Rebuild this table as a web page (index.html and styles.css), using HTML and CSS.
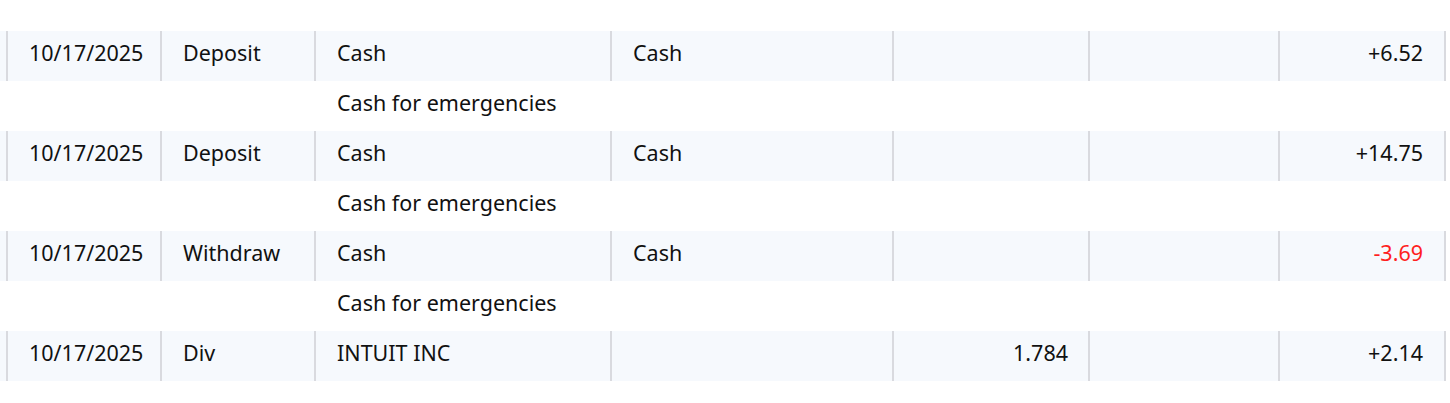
FILE: index.html
```html
<!DOCTYPE html>
<html lang="en">
<head>
    <meta charset="UTF-8">
    <meta name="viewport" content="width=device-width, initial-scale=1.0">
    <title>Transactions</title>
    <link rel="stylesheet" href="styles.css">
</head>
<body>
    <div class="ledger">
        <div class="row data">
            <div class="cell">10/17/2025</div>
            <div class="cell">Deposit</div>
            <div class="cell">Cash</div>
            <div class="cell">Cash</div>
            <div class="cell num"></div>
            <div class="cell num"></div>
            <div class="cell num last">+6.52</div>
        </div>
        <div class="row note">
            <div class="memo">Cash for emergencies</div>
        </div>

        <div class="row data">
            <div class="cell">10/17/2025</div>
            <div class="cell">Deposit</div>
            <div class="cell">Cash</div>
            <div class="cell">Cash</div>
            <div class="cell num"></div>
            <div class="cell num"></div>
            <div class="cell num last">+14.75</div>
        </div>
        <div class="row note">
            <div class="memo">Cash for emergencies</div>
        </div>

        <div class="row data">
            <div class="cell">10/17/2025</div>
            <div class="cell">Withdraw</div>
            <div class="cell">Cash</div>
            <div class="cell">Cash</div>
            <div class="cell num"></div>
            <div class="cell num"></div>
            <div class="cell num last negative">-3.69</div>
        </div>
        <div class="row note">
            <div class="memo">Cash for emergencies</div>
        </div>

        <div class="row data">
            <div class="cell">10/17/2025</div>
            <div class="cell">Div</div>
            <div class="cell">INTUIT INC</div>
            <div class="cell"></div>
            <div class="cell num">1.784</div>
            <div class="cell num"></div>
            <div class="cell num last">+2.14</div>
        </div>
    </div>
</body>
</html>
```

FILE: styles.css
```css
body {
    margin: 0;
    background: #fff;
    font-family: "Noto Sans", "Open Sans", sans-serif;
    font-size: 21.5px;
    color: #111;
}
.ledger {
    padding-top: 31px;
}
.row {
    display: grid;
    grid-template-columns: 154px 154px 296px 282px 196px 190px 168px;
    height: 50px;
    padding-left: 6px;
}
.data {
    background-color: #f6f9fd;
    width: 1440px;
}
.cell {
    box-sizing: border-box;
    border-left: 2px solid #d9dadf;
    padding: 0 21px 6px;
    line-height: 44px;
    white-space: nowrap;
}
.num {
    text-align: right;
    padding-right: 20px;
}
.last {
    border-right: 2px solid #d9dadf;
    padding-right: 21px;
}
.negative {
    color: #ff1f1f;
}
.memo {
    grid-column: 3 / 8;
    padding: 0 0 6px 23px;
    line-height: 44px;
}
```
